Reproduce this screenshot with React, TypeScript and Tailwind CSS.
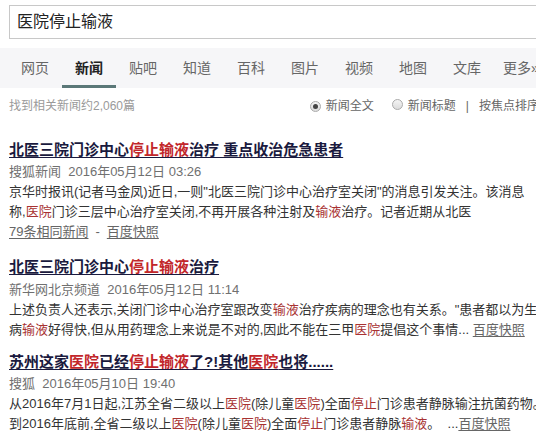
import React from "react";

const font = { fontFamily: '"Liberation Sans", "Noto Sans CJK SC", sans-serif' };

const tabs = ["网页", "新闻", "贴吧", "知道", "百科", "图片", "视频", "地图", "文库", "更多»"];

function Hl({ children }: { children: React.ReactNode }) {
  return <span className="text-[#a83232]">{children}</span>;
}

function Th({ children }: { children: React.ReactNode }) {
  return <span className="text-[#c2262a]">{children}</span>;
}

function Radio({ checked }: { checked?: boolean }) {
  return (
    <span className="inline-flex h-[11px] w-[11px] items-center justify-center rounded-full border border-[#aaa] bg-gradient-to-b from-[#f4f4f4] to-[#dcdcdc]">
      {checked ? <span className="h-[5px] w-[5px] rounded-full bg-[#444]" /> : null}
    </span>
  );
}

function Snap() {
  return <span className="text-[#666] underline underline-offset-2">百度快照</span>;
}

export default function App() {
  return (
    <div className="h-[445px] w-[536px] overflow-hidden bg-white" style={font}>
      <div className="pt-[5px] pl-[9px]">
        <div className="flex h-[34px] w-[560px] items-center border border-[#c8c8c8] pl-[7px] text-[16px] text-[#222]">
          医院停止输液
        </div>
      </div>

      <div className="mt-[9px] flex h-[40px] bg-[#f6f6f8] pl-[8px]">
        {tabs.map((tab) => (
          <div
            key={tab}
            className={`relative flex w-[54px] shrink-0 items-center justify-center whitespace-nowrap text-[14px] ${
              tab === "新闻" ? "font-bold text-[#222]" : "text-[#666]"
            }`}
          >
            {tab}
            {tab === "新闻" ? (
              <span className="absolute bottom-0 left-0 h-[3px] w-[54px] bg-[#5b7878]" />
            ) : null}
          </div>
        ))}
      </div>

      <div className="mt-[8px] flex h-[20px] items-center px-[9px] text-[12px]">
        <span className="text-[#9a9a9a]">找到相关新闻约2,060篇</span>
        <div className="ml-auto flex items-center whitespace-nowrap text-[#666]" style={{ marginRight: -12 }}>
          <Radio checked />
          <span className="ml-[5px]">新闻全文</span>
          <span className="ml-[18px]"><Radio /></span>
          <span className="ml-[5px]">新闻标题</span>
          <span className="ml-[10px]">|</span>
          <span className="ml-[10px]">按焦点排序</span>
        </div>
      </div>

      <div className="mt-[23px] px-[9px] whitespace-nowrap">
        <div>
          <div className="text-[15px] leading-[22px] font-bold text-[#1a1a3e] underline underline-offset-2">
            北医三院门诊中心<Th>停止输液</Th>治疗 重点收治危急患者
          </div>
          <div className="text-[13px] leading-[21px] text-[#707070]">搜狐新闻&nbsp;&nbsp;2016年05月12日 03:26</div>
          <div className="text-[13px] leading-[20px] text-[#333]">
            京华时报讯(记者马金凤)近日,一则"北医三院门诊中心治疗室关闭"的消息引发关注。该消息
          </div>
          <div className="text-[13px] leading-[20px] text-[#333]">
            称,<Hl>医院</Hl>门诊三层中心治疗室关闭,不再开展各种注射及<Hl>输液</Hl>治疗。记者近期从北医
          </div>
          <div className="text-[13px] leading-[19px] text-[#666]">
            <span className="underline underline-offset-2">79条相同新闻</span>
            <span className="mx-[7px]">-</span>
            <Snap />
          </div>
        </div>

        <div className="mt-[14px]">
          <div className="text-[15px] leading-[22px] font-bold text-[#1a1a3e] underline underline-offset-2 inline-block">
            北医三院门诊中心<Th>停止输液</Th>治疗
          </div>
          <div className="text-[13px] leading-[21px] text-[#707070]">新华网北京频道&nbsp;&nbsp;2016年05月12日 11:14</div>
          <div className="text-[13px] leading-[20px] text-[#333]">
            上述负责人还表示,关闭门诊中心治疗室跟改变<Hl>输液</Hl>治疗疾病的理念也有关系。"患者都以为生
          </div>
          <div className="text-[13px] leading-[20px] text-[#333]">
            病<Hl>输液</Hl>好得快,但从用药理念上来说是不对的,因此不能在三甲<Hl>医院</Hl>提倡这个事情...&nbsp;
            <Snap />
          </div>
        </div>

        <div className="mt-[11px]">
          <div className="text-[15px] leading-[22px] font-bold text-[#1a1a3e] underline underline-offset-2">
            苏州这家<Th>医院</Th>已经<Th>停止输液</Th>了?!其他<Th>医院</Th>也将......
          </div>
          <div className="text-[13px] leading-[21px] text-[#707070]">搜狐&nbsp;&nbsp;2016年05月10日 19:40</div>
          <div className="text-[13px] leading-[20px] text-[#333]">
            从2016年7月1日起,江苏全省二级以上<Hl>医院</Hl>(除儿童<Hl>医院</Hl>)全面<Hl>停止</Hl>门诊患者静脉输注抗菌药物。
          </div>
          <div className="text-[13px] leading-[20px] text-[#333]">
            到2016年底前,全省二级以上<Hl>医院</Hl>(除儿童<Hl>医院</Hl>)全面<Hl>停止</Hl>门诊患者静脉<Hl>输液</Hl>。&nbsp;&nbsp;...
            <Snap />
          </div>
        </div>
      </div>
    </div>
  );
}
